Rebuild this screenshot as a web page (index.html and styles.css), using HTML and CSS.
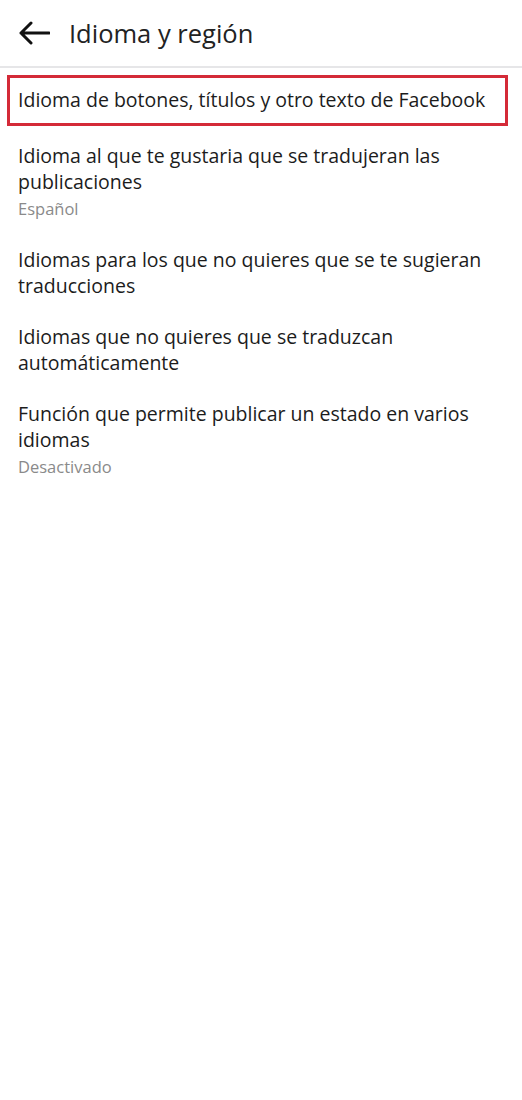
FILE: index.html
```html
<!DOCTYPE html>
<html lang="es">
<head>
    <meta charset="UTF-8">
    <meta name="viewport" content="width=device-width, initial-scale=1.0">
    <title>Idioma y región</title>
    <link rel="stylesheet" href="styles.css">
</head>
<body>
    <div class="top-bar">
        <button class="back-btn" aria-label="Atrás">
            <svg width="32" height="24" viewBox="0 0 32 24">
                <path d="M31 12H3M13 2L3 12l10 10" fill="none" stroke="#111" stroke-width="3" stroke-linecap="round" stroke-linejoin="round"/>
            </svg>
        </button>
        <h1>Idioma y región</h1>
    </div>

    <ul class="settings-list">
        <li class="setting highlighted">
            <div class="setting-title">Idioma de botones, títulos y otro texto de Facebook</div>
        </li>
        <li class="setting">
            <div class="setting-title">Idioma al que te gustaria que se tradujeran las publicaciones</div>
            <div class="setting-value">Español</div>
        </li>
        <li class="setting">
            <div class="setting-title">Idiomas para los que no quieres que se te sugieran traducciones</div>
        </li>
        <li class="setting">
            <div class="setting-title">Idiomas que no quieres que se traduzcan automáticamente</div>
        </li>
        <li class="setting">
            <div class="setting-title">Función que permite publicar un estado en varios idiomas</div>
            <div class="setting-value">Desactivado</div>
        </li>
    </ul>
</body>
</html>
```

FILE: styles.css
```css
body {
    margin: 0;
    font-family: 'Open Sans', 'Noto Sans', sans-serif;
    background-color: #fff;
    color: #1c1c1c;
}
.top-bar {
    display: flex;
    align-items: center;
    height: 66px;
    padding-left: 18px;
    border-bottom: 2px solid #e6e6e8;
}
.back-btn {
    border: none;
    background: none;
    padding: 0;
    width: 32px;
    height: 24px;
    margin-right: 19px;
    cursor: pointer;
}
.back-btn svg {
    display: block;
}
.top-bar h1 {
    margin: 0;
    font-size: 25.5px;
    font-weight: 400;
    color: #222;
}
.settings-list {
    list-style: none;
    margin: 0;
    padding: 0;
}
.setting {
    padding: 11px 18px 14px;
    font-size: 19.5px;
    line-height: 26px;
}
.setting.highlighted {
    margin: 7px 14px 6px 7px;
    padding: 9px 8px 10px;
    border: 3px solid #d42a38;
}
.setting-value {
    font-size: 16.5px;
    color: #8a8a8a;
    margin-top: 1px;
}
```
